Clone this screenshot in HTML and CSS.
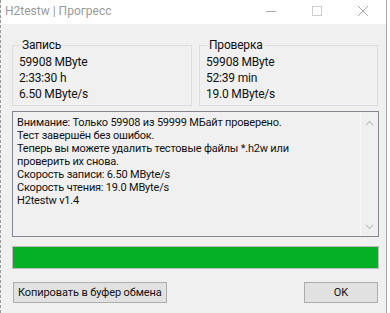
FILE: index.html
```html
<!DOCTYPE html>
<html>
<head>
  <title>H2testw | Прогресс</title>
  <link rel="stylesheet" href="styles.css">
</head>
<body>
  <div class="window">
    <div class="titlebar">
      <span class="title">H2testw | Прогресс</span>
      <div class="controls">
        <span class="ctl"><svg width="12" height="12" viewBox="0 0 12 12"><path d="M1 6.5h10" stroke="#aaa" stroke-width="1"/></svg></span>
        <span class="ctl"><svg width="12" height="12" viewBox="0 0 12 12"><rect x="1.5" y="1.5" width="9" height="9" fill="none" stroke="#ccc" stroke-width="1"/></svg></span>
        <span class="ctl"><svg width="12" height="12" viewBox="0 0 12 12"><path d="M1 1l10 10M11 1L1 11" stroke="#aaa" stroke-width="1"/></svg></span>
      </div>
    </div>

    <div class="content">
      <div class="groups">
        <fieldset class="group">
          <legend>Запись</legend>
          <div class="row">59908 MByte</div>
          <div class="row">2:33:30 h</div>
          <div class="row">6.50 MByte/s</div>
        </fieldset>
        <fieldset class="group">
          <legend>Проверка</legend>
          <div class="row">59908 MByte</div>
          <div class="row">52:39 min</div>
          <div class="row">19.0 MByte/s</div>
        </fieldset>
      </div>

      <div class="log">
        <div class="log-text">
          <div>Внимание: Только 59908 из 59999 МБайт проверено.</div>
          <div>Тест завершён без ошибок.</div>
          <div>Теперь вы можете удалить тестовые файлы *.h2w или</div>
          <div>проверить их снова.</div>
          <div>Скорость записи: 6.50 MByte/s</div>
          <div>Скорость чтения: 19.0 MByte/s</div>
          <div>H2testw v1.4</div>
        </div>
        <div class="scrollbar">
          <svg width="9" height="6" viewBox="0 0 9 6"><path d="M1 5l3.5-3.5L8 5" fill="none" stroke="#c4c4c4" stroke-width="1.2"/></svg>
          <svg width="9" height="6" viewBox="0 0 9 6"><path d="M1 1l3.5 3.5L8 1" fill="none" stroke="#c4c4c4" stroke-width="1.2"/></svg>
        </div>
      </div>

      <div class="progress"><div class="progress-fill" style="width: 100%"></div></div>

      <div class="buttons">
        <button class="btn">Копировать в буфер обмена</button>
        <button class="btn ok">OK</button>
      </div>
    </div>
  </div>
</body>
</html>
```

FILE: styles.css
```css
body {
  margin: 0;
  background: #ffffff;
  font-family: Roboto, "Noto Sans", sans-serif;
  color: #111;
}
.window {
  width: 387px;
  height: 313px;
  background: #f0f0f0;
  border-left: 1px dashed #9a9a9a;
  border-right: 1px solid #a8a8a8;
  box-sizing: border-box;
  overflow: hidden;
}
.titlebar {
  height: 24px;
  background: #fff;
  display: flex;
  justify-content: space-between;
  align-items: center;
}
.title {
  padding-left: 4px;
  font-size: 12px;
  color: #9a9a9a;
  margin-top: -3px;
}
.controls {
  display: flex;
  margin-top: -3px;
}
.ctl {
  width: 46px;
  display: flex;
  justify-content: center;
}
.content {
  padding: 16px 8px 0 11px;
}
.groups {
  display: grid;
  grid-template-columns: 180px 179px;
  gap: 7px;
}
.group {
  margin: 0;
  padding: 4px 6px 0 6px;
  height: 66px;
  box-sizing: border-box;
  border: 1px solid #dcdcdc;
  min-width: 0;
  font-size: 12px;
  letter-spacing: -0.2px;
}
.group legend {
  padding: 0 2px;
  margin-left: 1px;
  line-height: 10px;
}
.row {
  line-height: 16px;
}
.log {
  margin-top: 5px;
  width: 367px;
  height: 126px;
  box-sizing: border-box;
  border: 1px solid #828790;
  display: flex;
}
.log-text {
  flex: 1;
  padding: 4px 0 0 4px;
  font-size: 11px;
  line-height: 13px;
  letter-spacing: -0.2px;
}
.scrollbar {
  width: 17px;
  border-left: 1px solid #f8f8f8;
  display: flex;
  flex-direction: column;
  justify-content: space-between;
  align-items: center;
  padding: 8px 0 6px;
}
.progress {
  margin-top: 9px;
  width: 367px;
  height: 23px;
  box-sizing: border-box;
  border: 1px solid #bcbcbc;
  background: #e6e6e6;
}
.progress-fill {
  height: 100%;
  background: #06b025;
}
.buttons {
  margin-top: 13px;
  display: flex;
  justify-content: space-between;
  width: 366px;
}
.btn {
  height: 21px;
  padding: 0 4px;
  background: #e1e1e1;
  border: 1px solid #adadad;
  font-family: Roboto, "Noto Sans", sans-serif;
  font-size: 11px;
  letter-spacing: -0.1px;
  color: #111;
  margin-left: 1px;
}
.btn.ok {
  width: 74px;
}
```
